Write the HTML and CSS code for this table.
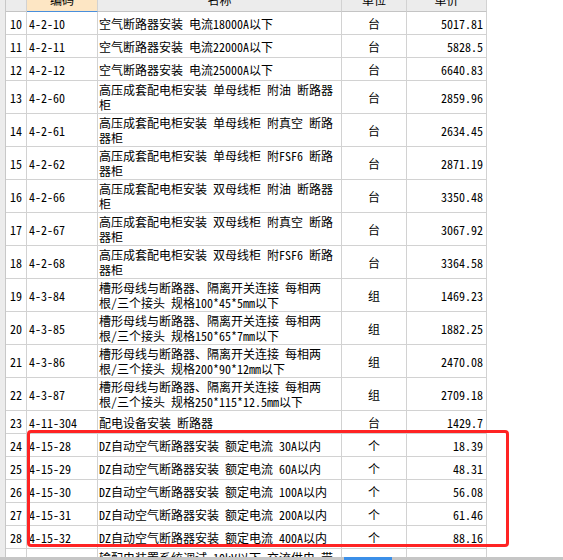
FILE: index.html
```html
<!DOCTYPE html>
<html lang="zh-CN">
<head>
<meta charset="utf-8">
<title>定额列表</title>
<link rel="stylesheet" href="styles.css">
</head>
<body>
<div class="frame">
  <div class="gutter"></div>
  <div class="sheet">
    <div class="row head">
      <div class="c num"></div>
      <div class="c code sel">编码</div>
      <div class="c name">名称</div>
      <div class="c unit">单位</div>
      <div class="c price">单价</div>
    </div>
    <div class="row"><div class="c num">10</div><div class="c code">4-2-10</div><div class="c name">空气断路器安装 电流18000A以下</div><div class="c unit">台</div><div class="c price">5017.81</div></div>
    <div class="row"><div class="c num">11</div><div class="c code">4-2-11</div><div class="c name">空气断路器安装 电流22000A以下</div><div class="c unit">台</div><div class="c price">5828.5</div></div>
    <div class="row"><div class="c num">12</div><div class="c code">4-2-12</div><div class="c name">空气断路器安装 电流25000A以下</div><div class="c unit">台</div><div class="c price">6640.83</div></div>
    <div class="row tall"><div class="c num">13</div><div class="c code">4-2-60</div><div class="c name">高压成套配电柜安装 单母线柜 附油 断路器<br>柜</div><div class="c unit">台</div><div class="c price">2859.96</div></div>
    <div class="row tall"><div class="c num">14</div><div class="c code">4-2-61</div><div class="c name">高压成套配电柜安装 单母线柜 附真空 断路<br>器柜</div><div class="c unit">台</div><div class="c price">2634.45</div></div>
    <div class="row tall"><div class="c num">15</div><div class="c code">4-2-62</div><div class="c name">高压成套配电柜安装 单母线柜 附FSF6 断路<br>器柜</div><div class="c unit">台</div><div class="c price">2871.19</div></div>
    <div class="row tall"><div class="c num">16</div><div class="c code">4-2-66</div><div class="c name">高压成套配电柜安装 双母线柜 附油 断路器<br>柜</div><div class="c unit">台</div><div class="c price">3350.48</div></div>
    <div class="row tall"><div class="c num">17</div><div class="c code">4-2-67</div><div class="c name">高压成套配电柜安装 双母线柜 附真空 断路<br>器柜</div><div class="c unit">台</div><div class="c price">3067.92</div></div>
    <div class="row tall"><div class="c num">18</div><div class="c code">4-2-68</div><div class="c name">高压成套配电柜安装 双母线柜 附FSF6 断路<br>器柜</div><div class="c unit">台</div><div class="c price">3364.58</div></div>
    <div class="row tall"><div class="c num">19</div><div class="c code">4-3-84</div><div class="c name">槽形母线与断路器、隔离开关连接 每相两<br>根/三个接头 规格100*45*5mm以下</div><div class="c unit">组</div><div class="c price">1469.23</div></div>
    <div class="row tall"><div class="c num">20</div><div class="c code">4-3-85</div><div class="c name">槽形母线与断路器、隔离开关连接 每相两<br>根/三个接头 规格150*65*7mm以下</div><div class="c unit">组</div><div class="c price">1882.25</div></div>
    <div class="row tall"><div class="c num">21</div><div class="c code">4-3-86</div><div class="c name">槽形母线与断路器、隔离开关连接 每相两<br>根/三个接头 规格200*90*12mm以下</div><div class="c unit">组</div><div class="c price">2470.08</div></div>
    <div class="row tall"><div class="c num">22</div><div class="c code">4-3-87</div><div class="c name">槽形母线与断路器、隔离开关连接 每相两<br>根/三个接头 规格250*115*12.5mm以下</div><div class="c unit">组</div><div class="c price">2709.18</div></div>
    <div class="row"><div class="c num">23</div><div class="c code">4-11-304</div><div class="c name">配电设备安装 断路器</div><div class="c unit">台</div><div class="c price">1429.7</div></div>
    <div class="row"><div class="c num">24</div><div class="c code">4-15-28</div><div class="c name">DZ自动空气断路器安装 额定电流 30A以内</div><div class="c unit">个</div><div class="c price">18.39</div></div>
    <div class="row"><div class="c num">25</div><div class="c code">4-15-29</div><div class="c name">DZ自动空气断路器安装 额定电流 60A以内</div><div class="c unit">个</div><div class="c price">48.31</div></div>
    <div class="row"><div class="c num">26</div><div class="c code">4-15-30</div><div class="c name">DZ自动空气断路器安装 额定电流 100A以内</div><div class="c unit">个</div><div class="c price">56.08</div></div>
    <div class="row"><div class="c num">27</div><div class="c code">4-15-31</div><div class="c name">DZ自动空气断路器安装 额定电流 200A以内</div><div class="c unit">个</div><div class="c price">61.46</div></div>
    <div class="row"><div class="c num">28</div><div class="c code">4-15-32</div><div class="c name">DZ自动空气断路器安装 额定电流 400A以内</div><div class="c unit">个</div><div class="c price">88.16</div></div>
    <div class="row tall"><div class="c num">29</div><div class="c code">4-15-33</div><div class="c name">输配电装置系统调试 10kV以下 交流供电 带<br>负荷隔离开关</div><div class="c unit">系统</div><div class="c price">1024.5</div></div>
  </div>
</div>
<div class="scrollbar"><div class="thumb"></div></div>
<div class="highlight"></div>
</body>
</html>
```

FILE: styles.css
```css
html, body {
  margin: 0;
  height: 560px;
  overflow: hidden;
  background: #fff;
}
body {
  display: flex;
  flex-direction: column;
  position: relative;
  font-family: "Noto Sans Mono CJK SC", "Noto Sans CJK SC", sans-serif;
  font-size: 12px;
  line-height: 15px;
  color: #000;
}
.frame {
  flex: 1;
  min-height: 0;
  display: flex;
  overflow: hidden;
}
.gutter {
  flex: none;
  width: 5px;
  background: #ececec;
}
.sheet {
  flex: none;
  width: 481px;
  border-left: 1px solid #c8c8c8;
  margin-top: -12px;
}
.row {
  display: grid;
  grid-template-columns: 21px 71px 244px 65px 80px;
  height: 23px;
}
.row.tall {
  height: 33px;
}
.row.head {
  height: 24px;
  background: #ececec;
}
.c {
  box-sizing: border-box;
  border-right: 1px solid #d2d2d2;
  border-bottom: 1px solid #d2d2d2;
  display: flex;
  align-items: center;
  white-space: nowrap;
  overflow: hidden;
}
.num {
  justify-content: center;
}
.code {
  padding-left: 2px;
}
.name {
  padding-left: 1px;
}
.unit {
  justify-content: center;
}
.price {
  justify-content: flex-end;
  padding-right: 3px;
}
.head .c {
  justify-content: center;
  padding: 0;
  border-bottom-color: #c4c4c4;
}
.head .sel {
  background: #fde6c4;
  border-bottom: 1px solid #4a8fdc;
}
.scrollbar {
  flex: none;
  height: 3px;
  background: #c6c6c6;
}
.thumb {
  margin-left: 344px;
  width: 48px;
  height: 100%;
  background: #3b8fe8;
}
.highlight {
  position: absolute;
  left: 27px;
  top: 430px;
  width: 482px;
  height: 117px;
  box-sizing: border-box;
  border: 3px solid #ff2323;
  border-radius: 4px;
}
```
